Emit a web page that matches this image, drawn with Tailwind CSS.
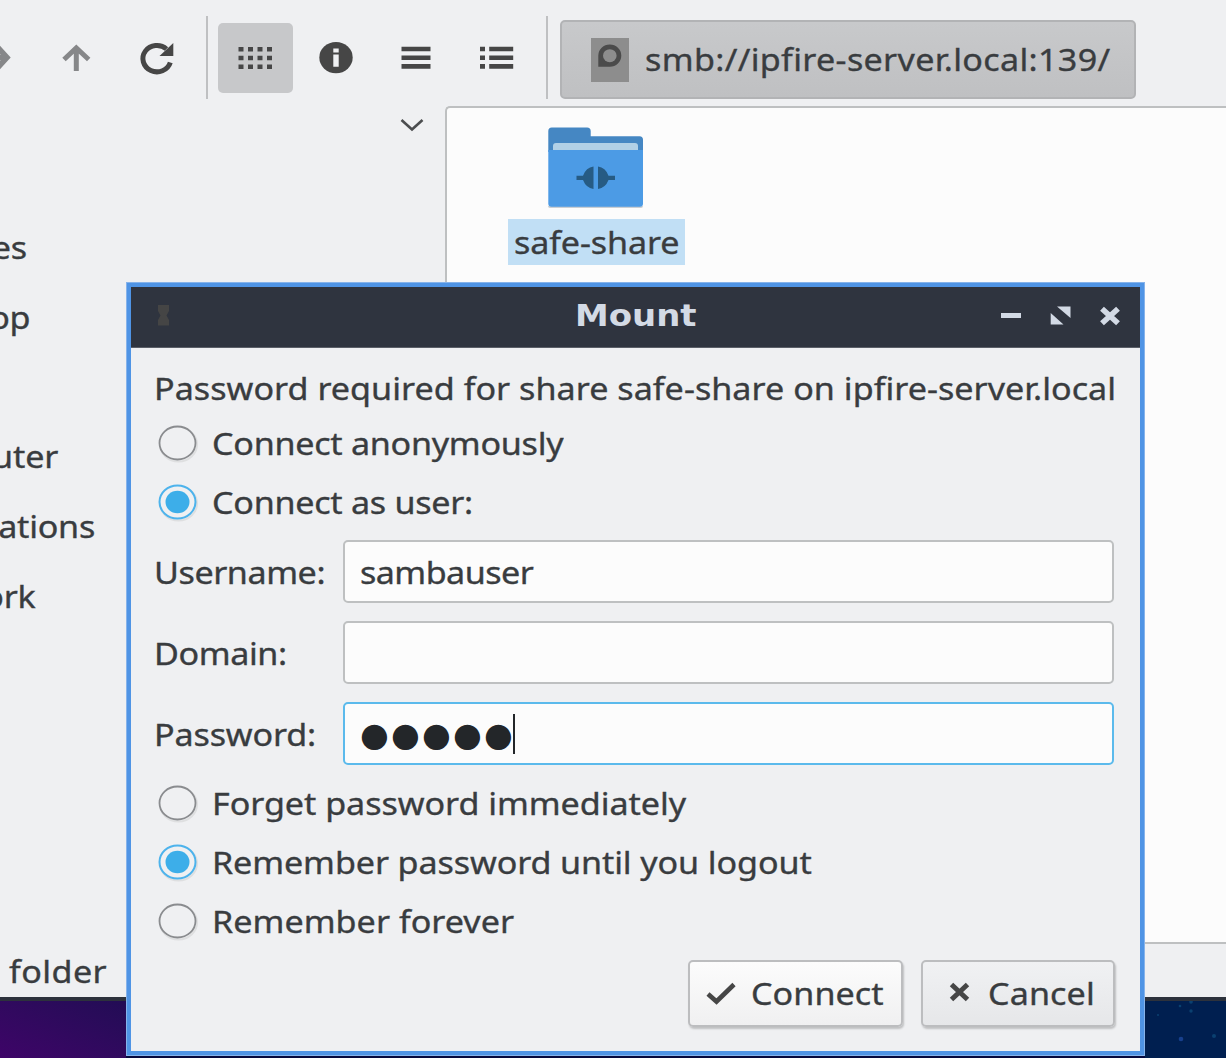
<!DOCTYPE html>
<html lang="en">
<head>
<meta charset="utf-8">
<title>Mount</title>
<script src="https://cdn.jsdelivr.net/npm/@tailwindcss/browser@4"></script>
</head>
<body class="relative h-[1058px] w-[1226px] overflow-hidden bg-[#05083d] font-['Noto_Sans','Open_Sans',sans-serif] text-[31px] leading-[40px] text-[#393c3f] [-webkit-text-stroke:0.35px]">

<!-- File manager window -->
<div class="flex h-[1001px] flex-col border-b-4 border-[#2d323c] bg-[#eff0f2]">
  <header class="flex h-[106px] shrink-0 items-start">
    <svg class="h-[106px] w-[206px] shrink-0" viewBox="0 0 206 106" fill="none">
      <path d="M-3 46.500L7 57.500L-3 68.500M-10 57.500H7" stroke="#868789" stroke-width="5.500"/>
      <path d="M64 59.500L76.300 48L88.700 59.500M76.300 49V71" stroke="#868789" stroke-width="5"/>
      <path d="M170.300 62.500A14 13.200 0 1 1 166.500 49" stroke="#464646" stroke-width="5"/>
      <path d="M173.300 43V56H159.500Z" fill="#464646"/>
    </svg>
    <div class="mt-4 h-[83px] w-[2px] bg-[#bfc0c2]"></div>
    <div class="mt-[23px] ml-[10px] flex h-[70px] w-[75px] items-center justify-center rounded-[5px] bg-[#c7c8ca]">
      <svg class="h-[24px] w-[35px]" viewBox="0 0 35 24" fill="#464646">
        <path d="M0.500 1h5v4.500h-5zM10 1h5v4.500h-5zM19.500 1h5v4.500h-5zM29 1h5v4.500h-5zM0.500 9.700h5v4.500h-5zM10 9.700h5v4.500h-5zM19.500 9.700h5v4.500h-5zM29 9.700h5v4.500h-5zM0.500 18.400h5v4.500h-5zM10 18.400h5v4.500h-5zM19.500 18.400h5v4.500h-5zM29 18.400h5v4.500h-5z"/>
      </svg>
    </div>
    <svg class="mt-[38px] ml-[25px] h-10 w-[36px]" viewBox="318 38 36 40">
      <ellipse cx="336" cy="57.600" rx="16.700" ry="15.600" fill="#464646"/>
      <path d="M333.300 48.500h5.400v4h-5.400zM333.300 54.500h5.400v12.300h-5.400z" fill="#eff0f2"/>
    </svg>
    <svg class="mt-[38px] ml-[46px] h-10 w-8" viewBox="400 38 32 40" fill="#464646">
      <path d="M401.500 46.700h29v4.600h-29zM401.500 55.400h29v4.600h-29zM401.500 64.100h29v4.600h-29z"/>
    </svg>
    <svg class="mt-[38px] ml-[46px] h-10 w-9" viewBox="478 38 36 40" fill="#464646">
      <path d="M480 46.700h5v4.600h-5zM480 55.400h5v4.600h-5zM480 64.100h5v4.600h-5zM489.200 46.700h24v4.600h-24zM489.200 55.400h24v4.600h-24zM489.200 64.100h24v4.600h-24z"/>
    </svg>
    <div class="mt-4 ml-8 h-[83px] w-[2px] bg-[#bfc0c2]"></div>
    <div class="mt-[20px] ml-3 flex h-[79px] w-[576px] items-center rounded-[5px] border-2 border-[#b2b3b5] bg-linear-to-b from-[#c8c9cb] to-[#bfc0c2] pl-[29px]">
      <svg class="h-[44px] w-[38px]" viewBox="0 0 38 44">
        <rect width="38" height="44" fill="#8d8d8d"/>
        <path d="M7.300 28.700V17.600A11.500 11.100 0 1 1 18.800 28.700Z" fill="#4b4b4b"/>
        <ellipse cx="18.800" cy="17.700" rx="6.800" ry="6.500" fill="#8d8d8d"/>
      </svg>
      <span class="mb-[2px] ml-4 origin-left scale-x-[1.1] tracking-[0.3px] whitespace-nowrap">smb://ipfire-server.local:139/</span>
    </div>
  </header>

  <div class="flex h-[838px] shrink-0">
    <aside class="w-[445px] shrink-0">
      <div class="flex h-[106px] justify-end pt-3 pr-[21px]">
        <svg class="h-[15px] w-6" viewBox="0 0 24 15" fill="none" stroke="#4b4d4f" stroke-width="2.600"><path d="M1.500 2L12 11.500L22.500 2"/></svg>
      </div>
      <div class="flex h-[69.8px] w-[27px] items-center justify-end"><span class="origin-right scale-x-[1.1] tracking-[-0.3px]">es</span></div>
      <div class="flex h-[69.8px] w-[30px] items-center justify-end"><span class="origin-right scale-x-[1.1] tracking-[-0.3px]">op</span></div>
      <div class="h-[69.8px]"></div>
      <div class="flex h-[69.8px] w-[58px] items-center justify-end"><span class="origin-right scale-x-[1.1] tracking-[-0.1px]">uter</span></div>
      <div class="flex h-[69.8px] w-[95px] items-center justify-end"><span class="origin-right scale-x-[1.1] tracking-[-0.23px]">ations</span></div>
      <div class="flex h-[69.8px] w-[36px] items-center justify-end"><span class="origin-right scale-x-[1.1] tracking-[-0.2px]">ork</span></div>
    </aside>
    <main class="flex-1 rounded-tl-[5px] border-t-2 border-b-2 border-l-2 border-[#bec0c1] bg-[#fcfcfc]">
      <div class="ml-[61px] flex w-[177px] flex-col pt-[18px]">
        <svg class="ml-[38px] h-[84px] w-[98px]" viewBox="546 126 98 84">
          <path d="M548 206a2 2 0 0 0 2 2h91a2 2 0 0 0 2-2z" fill="#c9ced3"/>
          <path d="M548.300 150V131q0-3.500 3.500-3.500H587q3.700 0 3.700 3.500v5.300H639.500q3.500 0 3.500 3.500V152H548.300Z" fill="#4587c3"/>
          <path d="M553 151V146q0-3 3-3H635q3 0 3 3V151Z" fill="#b1d0e6"/>
          <path d="M548.300 150H643V203.500q0 3.200-3.200 3.200H551.500q-3.200 0-3.200-3.200Z" fill="#4c9be5"/>
          <path d="M576.500 175.700H583Q586 167.500 593.500 166.500V189Q586 188 583 180.100H576.500ZM615 175.700H608.500Q605.500 167.500 598 166.500V189Q605.500 188 608.500 180.100H615Z" fill="#265b84"/>
        </svg>
        <div class="mt-[9px] flex h-[46px] w-full items-center bg-[#c1dff5] pb-px pl-[6px]"><span class="origin-left scale-x-[1.1] tracking-[-0.1px] whitespace-nowrap">safe-share</span></div>
      </div>
    </main>
  </div>
  <footer class="flex flex-1 items-center pl-[9px]"><span class="origin-left scale-x-[1.1] tracking-[0.4px]">folder</span></footer>
</div>

<!-- Desktop wallpaper -->
<div class="flex h-[57px]">
  <div class="w-[126px] bg-linear-to-tr from-[#3e0468] to-[#220c55]"></div>
  <div class="flex-1 bg-[#05083d]"></div>
  <svg class="h-[57px] w-[81px] bg-[#001f50]" viewBox="1145 1001 81 57">
    <g fill="#0a4070"><circle cx="1191" cy="1002" r="1.800"/><circle cx="1180" cy="1006" r="1.300"/><circle cx="1191" cy="1011" r="1.700"/><circle cx="1158" cy="1015" r="1"/><circle cx="1214" cy="1036" r="2"/></g>
    <circle cx="1181" cy="1039" r="2.300" fill="#173f8c"/>
  </svg>
</div>

<!-- Mount dialog -->
<section class="absolute top-[282px] left-[126px] flex h-[774px] w-[1019px] flex-col border border-[#86b3eb] bg-[#4f94e5] p-1">
  <div class="flex h-[61px] shrink-0 items-center border-b border-[#5b5f68] bg-[#2f343f]">
    <svg class="mb-[2px] ml-[26px] h-6 w-4 shrink-0" viewBox="0 0 16 24"><path d="M1 1h11v6L9.500 11.500L12 16v5.500H1V16L3.500 11.500L1 7Z" fill="#454545"/></svg>
    <div class="ml-[402px] flex-1 pb-[6px]"><span class="inline-block origin-left scale-x-[1.13] font-['DejaVu_Sans'] text-[30px] leading-[34px] font-bold text-[#d3dae5] [-webkit-text-stroke:0px]">Mount</span></div>
    <svg class="mr-[18px] mb-[2px] h-6 w-[122px]" viewBox="1000 304 122 24" fill="#d3dae5">
      <path d="M1001 313h20v5h-20z"/>
      <path d="M1057 306.500H1070.500V318ZM1050.700 313V324.500H1063.500Z"/>
      <path d="M1102 308.700L1118 323.300M1118 308.700L1102 323.300" fill="none" stroke="#d3dae5" stroke-width="5.600"/>
    </svg>
  </div>
  <div class="flex min-h-0 flex-1 flex-col bg-[#eff0f2] pr-[26px] pl-[23px]">
    <p class="mt-[15px] flex h-[51px] items-center pb-[2px]"><span class="origin-left scale-x-[1.1] tracking-[0.03px] whitespace-nowrap">Password required for share safe-share on ipfire-server.local</span></p>

    <div class="flex h-[59px] items-center pb-[2px] pl-1">
      <svg class="mr-[13.500px] h-10 w-[40px] shrink-0" viewBox="0 0 40 40"><ellipse cx="20.500" cy="21.500" rx="18.500" ry="17" fill="none" stroke="#dedfe0" stroke-width="2"/><ellipse cx="19.500" cy="20" rx="18" ry="16.500" fill="#eff0f2" stroke="#8a8c8f" stroke-width="1.800"/></svg>
      <span class="origin-left scale-x-[1.1] tracking-[-0.25px] whitespace-nowrap">Connect anonymously</span>
    </div>
    <div class="flex h-[59px] items-center pb-[2px] pl-1">
      <svg class="mr-[13.500px] h-10 w-[40px] shrink-0" viewBox="0 0 40 40"><ellipse cx="20.500" cy="21.500" rx="18.500" ry="17" fill="none" stroke="#dedfe0" stroke-width="2"/><ellipse cx="19.500" cy="20" rx="18" ry="16.500" fill="#eff0f2" stroke="#4db3ec" stroke-width="2"/><ellipse cx="19.500" cy="20" rx="12" ry="11.300" fill="#3daee9"/></svg>
      <span class="origin-left scale-x-[1.1] tracking-[-0.25px] whitespace-nowrap">Connect as user:</span>
    </div>

    <div class="mt-2 grid grid-cols-[189px_1fr] gap-y-[18px]">
      <label class="flex h-[63px] items-center"><span class="origin-left scale-x-[1.1] tracking-[-0.4px]">Username:</span></label>
      <div class="flex items-center rounded-[5px] border-2 border-[#bec0c1] bg-[#fcfcfc] pl-[15px]"><span class="origin-left scale-x-[1.1] tracking-[-0.5px]">sambauser</span></div>
      <label class="flex h-[63px] items-center"><span class="origin-left scale-x-[1.1] tracking-[-0.37px]">Domain:</span></label>
      <div class="rounded-[5px] border-2 border-[#bec0c1] bg-[#fcfcfc]"></div>
      <label class="flex h-[63px] items-center"><span class="origin-left scale-x-[1.1] tracking-[-0.13px]">Password:</span></label>
      <div class="flex items-center rounded-[5px] border-2 border-[#5bbaec] bg-[#fcfcfc] pl-[15px]"><span class="w-[153px] pt-[2px] font-['DejaVu_Sans'] text-[33px] tracking-[2.2px] whitespace-nowrap text-[#232629] [-webkit-text-stroke:0px]">●●●●●</span><span class="mt-px h-10 w-[2px] shrink-0 bg-[#232629]"></span></div>
    </div>

    <div class="mt-[9px] flex h-[59px] items-center pb-[2px] pl-1">
      <svg class="mr-[13.500px] h-10 w-[40px] shrink-0" viewBox="0 0 40 40"><ellipse cx="20.500" cy="21.500" rx="18.500" ry="17" fill="none" stroke="#dedfe0" stroke-width="2"/><ellipse cx="19.500" cy="20" rx="18" ry="16.500" fill="#eff0f2" stroke="#8a8c8f" stroke-width="1.800"/></svg>
      <span class="origin-left scale-x-[1.1] tracking-[-0.04px] whitespace-nowrap">Forget password immediately</span>
    </div>
    <div class="flex h-[59px] items-center pb-[2px] pl-1">
      <svg class="mr-[13.500px] h-10 w-[40px] shrink-0" viewBox="0 0 40 40"><ellipse cx="20.500" cy="21.500" rx="18.500" ry="17" fill="none" stroke="#dedfe0" stroke-width="2"/><ellipse cx="19.500" cy="20" rx="18" ry="16.500" fill="#eff0f2" stroke="#4db3ec" stroke-width="2"/><ellipse cx="19.500" cy="20" rx="12" ry="11.300" fill="#3daee9"/></svg>
      <span class="origin-left scale-x-[1.1] tracking-[-0.1px] whitespace-nowrap">Remember password until you logout</span>
    </div>
    <div class="flex h-[59px] items-center pb-[2px] pl-1">
      <svg class="mr-[13.500px] h-10 w-[40px] shrink-0" viewBox="0 0 40 40"><ellipse cx="20.500" cy="21.500" rx="18.500" ry="17" fill="none" stroke="#dedfe0" stroke-width="2"/><ellipse cx="19.500" cy="20" rx="18" ry="16.500" fill="#eff0f2" stroke="#8a8c8f" stroke-width="1.800"/></svg>
      <span class="origin-left scale-x-[1.1] tracking-[0.03px] whitespace-nowrap">Remember forever</span>
    </div>

    <div class="mt-[9px] -mr-px flex justify-end gap-[18px]">
      <button class="flex h-[67px] w-[215px] items-center rounded-[5px] border-2 border-[#bcbdbf] bg-linear-to-b from-[#fcfcfc] to-[#f0f0f1] pl-[16px] shadow-[1px_2px_2px_#00000033]">
        <svg class="h-6 w-8" viewBox="0 0 32 24" fill="none" stroke="#464646" stroke-width="4.600"><path d="M2 12L10.500 19.500L28 2.500"/></svg>
        <span class="mb-[2px] ml-[13px] origin-left scale-x-[1.1] tracking-[0.05px]">Connect</span>
      </button>
      <button class="flex h-[67px] w-[194px] items-center rounded-[5px] border-2 border-[#bcbdbf] bg-linear-to-b from-[#f0f1f3] to-[#e6e7e9] pl-[26px] shadow-[1px_2px_2px_#00000033]">
        <svg class="mb-1 h-5 w-[21px]" viewBox="0 0 21 20" fill="none" stroke="#464646" stroke-width="5"><path d="M2.500 2.500L18.500 17.500M18.500 2.500L2.500 17.500"/></svg>
        <span class="mb-[2px] ml-[18px] origin-left scale-x-[1.1] tracking-[0.1px]">Cancel</span>
      </button>
    </div>
  </div>
</section>
</body>
</html>
